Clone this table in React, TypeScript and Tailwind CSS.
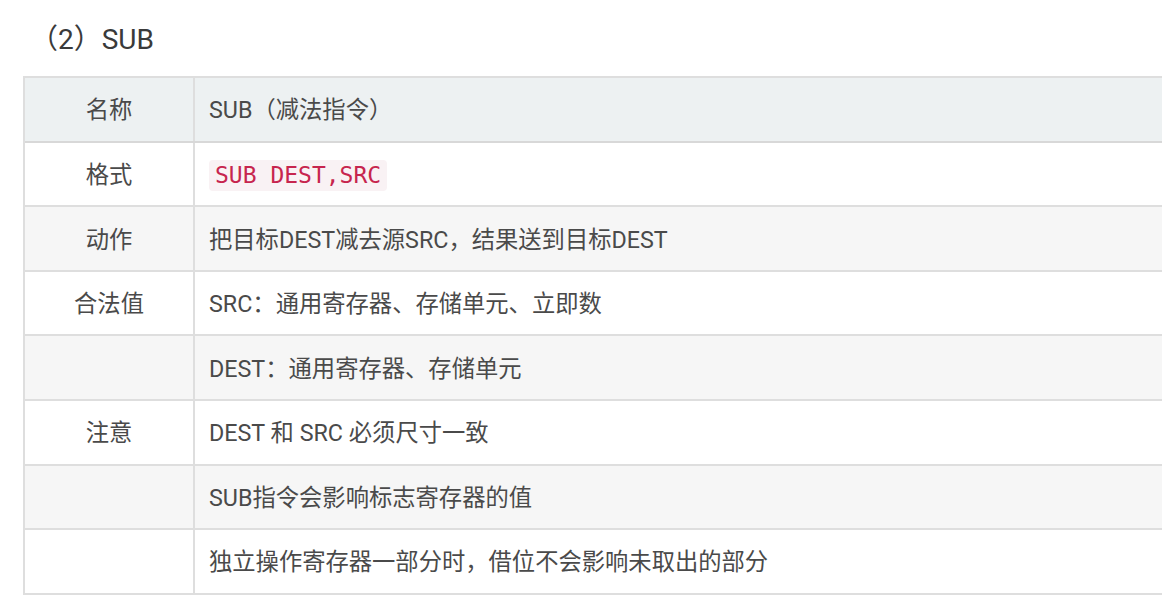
const rows: { label: string; content: React.ReactNode; bg: string }[] = [
  { label: '格式', content: 'CODE', bg: 'bg-white' },
  { label: '动作', content: '把目标DEST减去源SRC，结果送到目标DEST', bg: 'bg-[#f6f6f6]' },
  { label: '合法值', content: 'SRC：通用寄存器、存储单元、立即数', bg: 'bg-white' },
  { label: '', content: 'DEST：通用寄存器、存储单元', bg: 'bg-[#f6f6f6]' },
  { label: '注意', content: 'DEST 和 SRC 必须尺寸一致', bg: 'bg-white' },
  { label: '', content: 'SUB指令会影响标志寄存器的值', bg: 'bg-[#f6f6f6]' },
  { label: '', content: '独立操作寄存器一部分时，借位不会影响未取出的部分', bg: 'bg-white' },
]

function Row({ label, content, bg }: { label: string; content: React.ReactNode; bg: string }) {
  return (
    <div className={`flex h-[64.6px] border-b-2 border-[#dedede] ${bg}`}>
      <div className="w-[170px] shrink-0 border-r-2 border-[#dedede] flex items-center justify-center pt-[3px]">
        {label}
      </div>
      <div className="flex-1 flex items-center pl-[14px] pt-[3px]">
        {content === 'CODE' ? (
          <span className="bg-[#f9f2f4] text-[#c7254e] rounded px-[6px] py-[2px] font-['DejaVu_Sans_Mono',monospace] text-[23px] leading-[27px]">
            SUB DEST,SRC
          </span>
        ) : (
          content
        )}
      </div>
    </div>
  )
}

export default function App() {
  return (
    <div className="w-[1162px] h-[615px] overflow-hidden bg-white text-[#4a4a4a] font-['Roboto','Noto_Sans_CJK_SC',sans-serif]">
      <h2 className="pt-[20px] pl-[30px] text-[28px] leading-[40px] text-[#3a3a3a] font-normal">（2）SUB</h2>
      <div className="mt-[16px] ml-[23px] w-[1180px] border-l-2 border-t-2 border-[#dedede] text-[23.3px]">
        <div className="flex h-[64.6px] border-b-2 border-[#d8d8d8] bg-[#edf1f2]">
          <div className="w-[170px] shrink-0 border-r-2 border-[#dedede] flex items-center justify-center pt-[3px]">
            名称
          </div>
          <div className="flex-1 flex items-center pl-[14px] pt-[3px]">SUB（减法指令）</div>
        </div>
        {rows.map((r, i) => (
          <Row key={i} {...r} />
        ))}
      </div>
    </div>
  )
}
